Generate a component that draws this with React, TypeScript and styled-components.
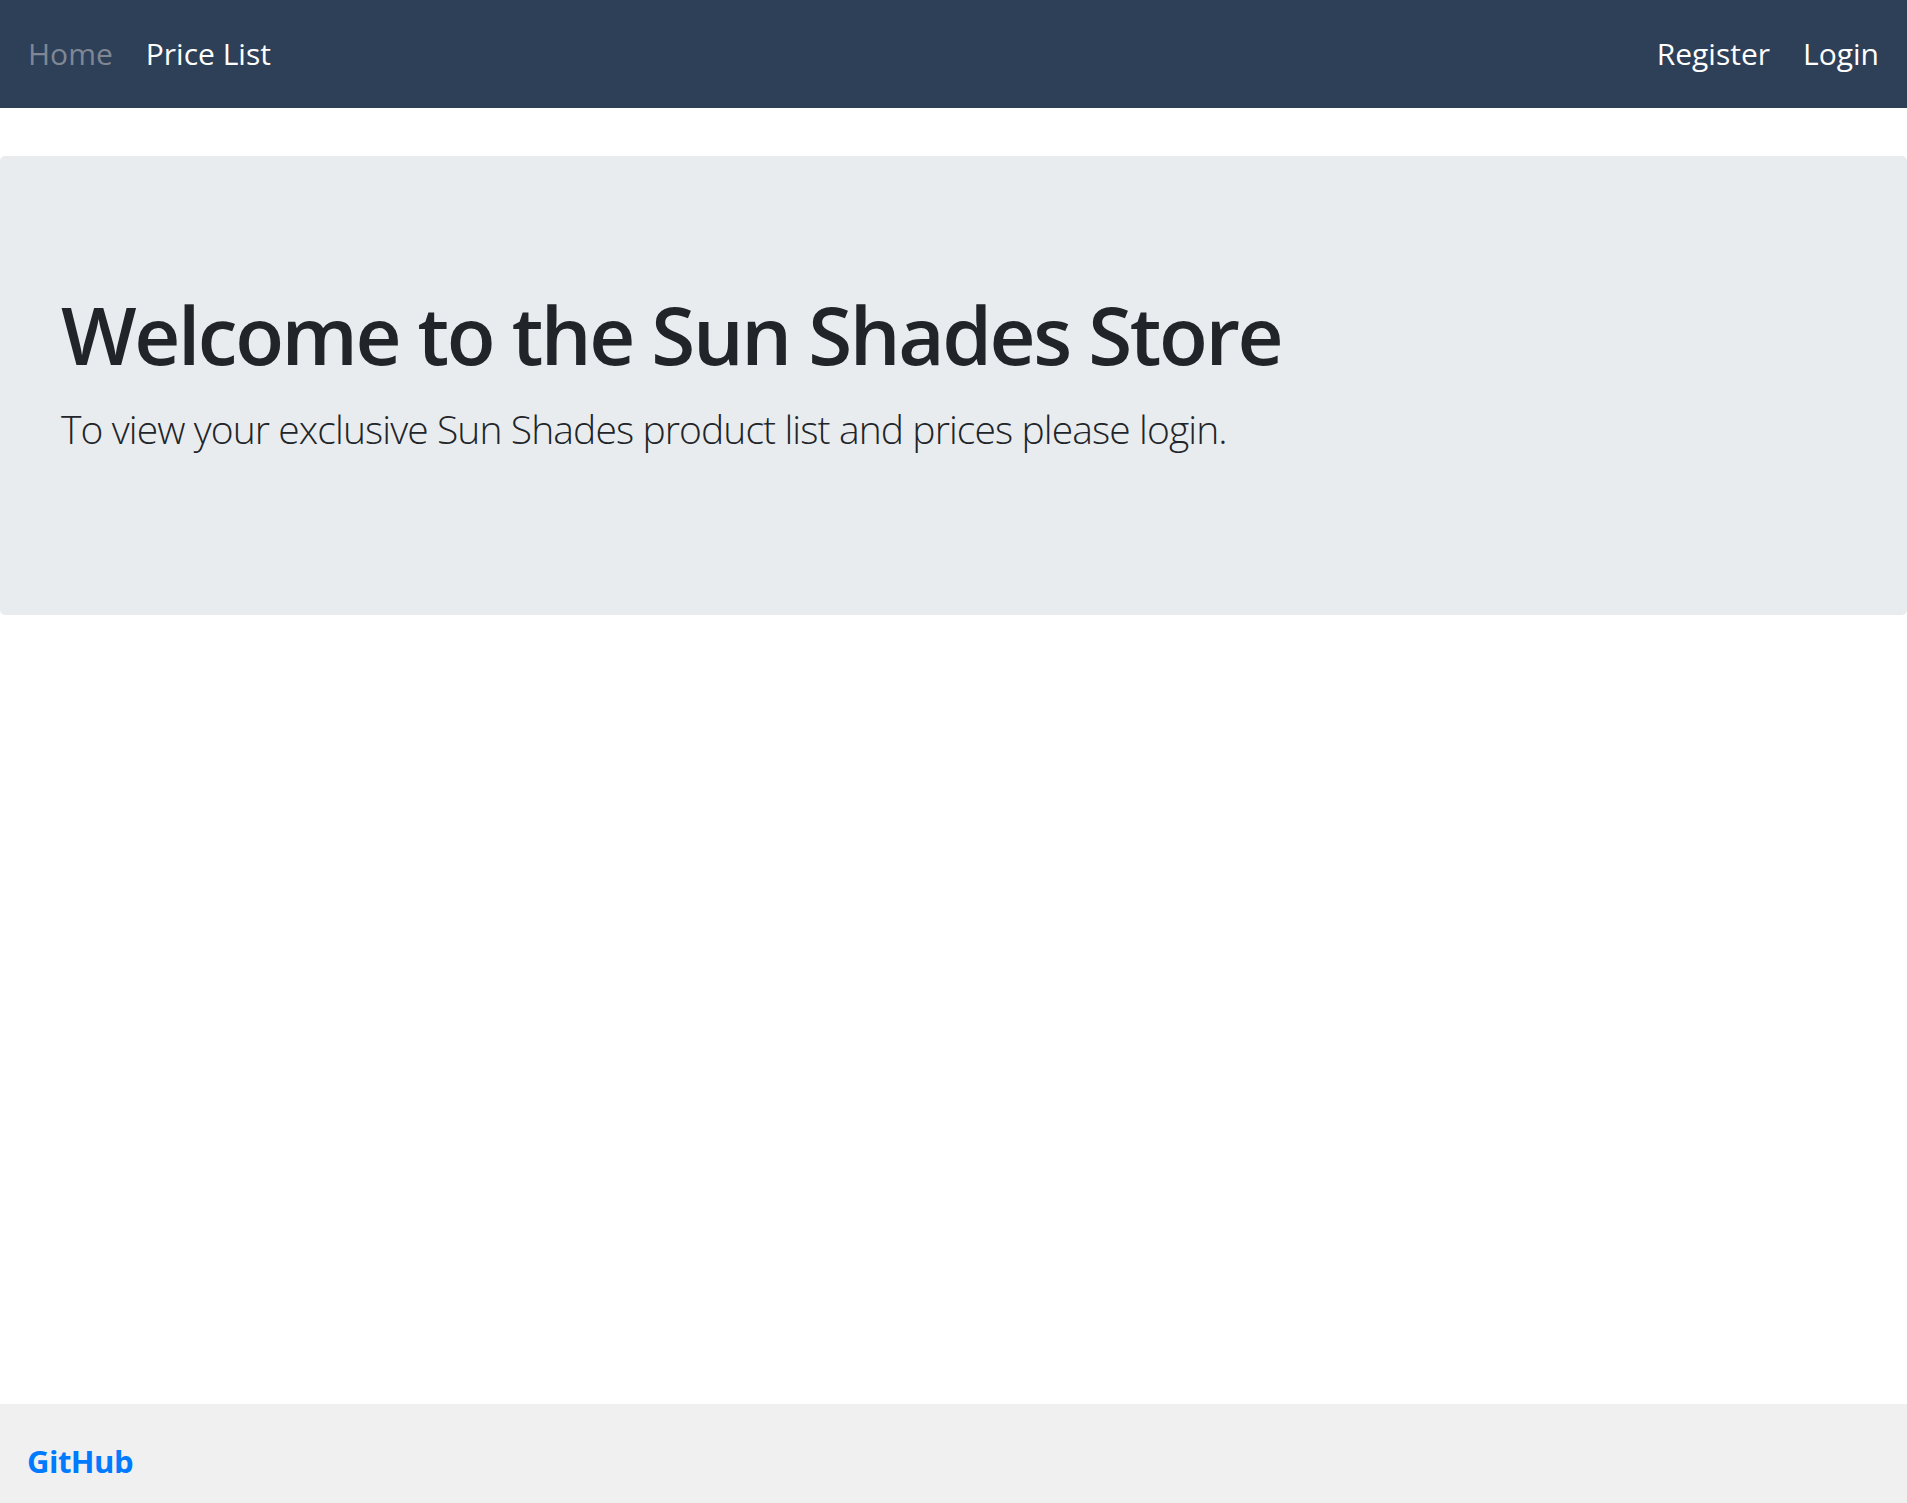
import React from "react";
import styled, { createGlobalStyle } from "styled-components";

const GlobalStyle = createGlobalStyle`
  html, body { margin: 0; padding: 0; background: #ffffff; }
  body { font-family: "Open Sans", "Noto Sans", sans-serif; color: #212529; }
  * { box-sizing: border-box; }
`;

const Page = styled.div`
  min-height: 100vh;
  display: flex;
  flex-direction: column;
`;

const NavBar = styled.nav`
  height: 108px;
  background: #2e3f58;
  display: flex;
  align-items: center;
  justify-content: space-between;
  padding: 0 28px 0 28px;
`;

const NavGroup = styled.div`
  display: flex;
  align-items: center;
  gap: 33px;
`;

const NavLink = styled.a<{ $muted?: boolean }>`
  font-size: 30px;
  line-height: 40px;
  color: ${(p) => (p.$muted ? "#7f8795" : "#ffffff")};
  text-decoration: none;
  letter-spacing: 0;
`;

const Main = styled.main`
  padding-top: 48px;
  flex: 1;
`;

const Jumbotron = styled.section`
  background: #e9ecef;
  border-radius: 5px;
  height: 459px;
  padding: 130px 61px 0;
`;

const Heading = styled.h1`
  margin: 0;
  font-size: 80px;
  line-height: 96px;
  font-weight: 600;
  color: #212529;
  letter-spacing: -2.4px;
`;

const Lead = styled.p`
  margin: 0;
  margin-top: 20px;
  font-size: 39px;
  line-height: 54px;
  font-weight: 300;
  color: #212529;
  letter-spacing: -0.9px;
`;

const Footer = styled.footer`
  height: 99px;
  background: #f0f0f0;
  display: flex;
  align-items: center;
  padding: 14px 27px 0;
`;

const FooterLink = styled.a`
  font-size: 31px;
  font-weight: 700;
  color: #007bff;
  text-decoration: none;
  letter-spacing: -0.5px;
`;

export default function App() {
  return (
    <>
      <GlobalStyle />
      <Page>
        <NavBar>
          <NavGroup>
            <NavLink $muted href="#">Home</NavLink>
            <NavLink href="#">Price List</NavLink>
          </NavGroup>
          <NavGroup>
            <NavLink href="#">Register</NavLink>
            <NavLink href="#">Login</NavLink>
          </NavGroup>
        </NavBar>
        <Main>
          <Jumbotron>
            <Heading>Welcome to the Sun Shades Store</Heading>
            <Lead>To view your exclusive Sun Shades product list and prices please login.</Lead>
          </Jumbotron>
        </Main>
        <Footer>
          <FooterLink href="#">GitHub</FooterLink>
        </Footer>
      </Page>
    </>
  );
}
